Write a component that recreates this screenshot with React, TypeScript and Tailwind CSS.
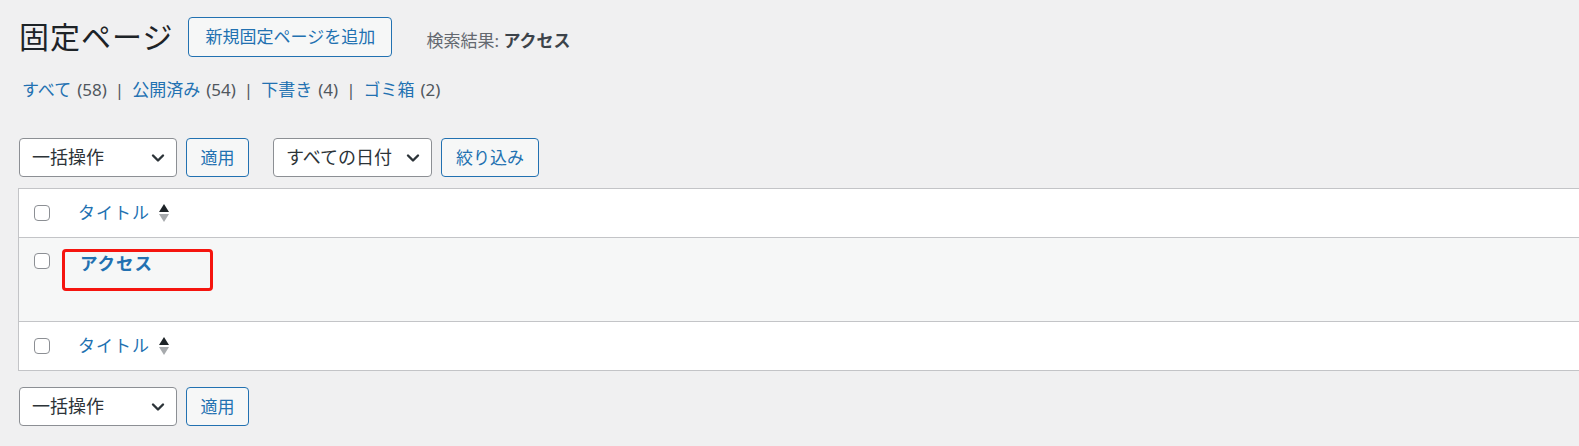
import React from "react";

const font = { fontFamily: '"Noto Sans", "Noto Sans CJK JP", sans-serif' };

function Chevron() {
  return (
    <svg width="16" height="16" viewBox="0 0 16 16" className="shrink-0">
      <path d="M3 5.5 L8 10.5 L13 5.5" fill="none" stroke="#2c3338" strokeWidth="2.4" strokeLinecap="round" strokeLinejoin="round" />
    </svg>
  );
}

function SortArrows() {
  return (
    <svg width="12" height="20" viewBox="0 0 12 20" className="ml-[8px]">
      <path d="M1 9 L6 1 L11 9 Z" fill="#1d2327" />
      <path d="M1 11 L6 19 L11 11 Z" fill="#a7aaad" />
    </svg>
  );
}

function Checkbox() {
  return <div className="w-[16px] h-[16px] rounded-[4px] border border-[#8c8f94] bg-white shrink-0" />;
}

function Select({ label, width, pad = "justify-between" }: { label: string; width: string; pad?: string }) {
  return (
    <div className={`${width} h-[39px] border border-[#8c8f94] rounded-[4px] bg-white flex items-center ${pad} pl-[12px] pr-[10px] text-[18px] text-[#2c3338]`}>
      <span>{label}</span>
      <Chevron />
    </div>
  );
}

function Btn({ label, width }: { label: string; width: string }) {
  return (
    <div className={`${width} h-[39px] border border-[#2271b1] rounded-[4px] bg-[#f6f7f7] flex items-center justify-center text-[17px] text-[#2271b1]`}>
      {label}
    </div>
  );
}

function HeaderRow({ border }: { border: string }) {
  return (
    <div className={`h-[49px] bg-white flex items-center pl-[15px] ${border} border-[#c3c4c7]`}>
      <Checkbox />
      <span className="ml-[28px] text-[17px] text-[#2271b1] tracking-[1px]">タイトル</span>
      <SortArrows />
    </div>
  );
}

function Sep() {
  return <span className="mx-[8px] text-[#50575e]">|</span>;
}

export default function App() {
  return (
    <div className="w-[1579px] h-[446px] bg-[#f0f0f1] overflow-hidden" style={font}>
      <div className="pl-[19px]">
        <div className="flex items-center h-[40px] mt-[17px]">
          <h1 className="text-[30px] text-[#1d2327] font-normal leading-none tracking-[1px]">固定ページ</h1>
          <div className="ml-[15px] w-[204px] h-[40px] border border-[#2271b1] rounded-[4px] bg-[#f6f7f7] flex items-center justify-center text-[17px] text-[#2271b1]">
            新規固定ページを追加
          </div>
          <div className="ml-[34px] mt-[8px] text-[17px] text-[#646970]">
            検索結果: <span className="font-bold text-[#3c434a]">アクセス</span>
          </div>
        </div>
        <div className="mt-[20px] ml-[3px] text-[17px] text-[#50575e] flex items-center h-[26px]">
          <span className="text-[#2271b1]">すべて</span>
          <span className="ml-[6px]">(58)</span>
          <Sep />
          <span className="text-[#2271b1]">公開済み</span>
          <span className="ml-[6px]">(54)</span>
          <Sep />
          <span className="text-[#2271b1]">下書き</span>
          <span className="ml-[6px]">(4)</span>
          <Sep />
          <span className="text-[#2271b1]">ゴミ箱</span>
          <span className="ml-[6px]">(2)</span>
        </div>
        <div className="mt-[35px] flex items-center">
          <Select label="一括操作" width="w-[158px]" />
          <div className="ml-[9px]"><Btn label="適用" width="w-[63px]" /></div>
          <div className="ml-[24px]"><Select label="すべての日付" width="w-[159px]" /></div>
          <div className="ml-[9px]"><Btn label="絞り込み" width="w-[98px]" /></div>
        </div>
      </div>
      <div className="ml-[18px] mt-[11px] border-l border-t border-b border-[#c3c4c7]">
        <HeaderRow border="border-b" />
        <div className="h-[83px] bg-[#f6f7f7] flex items-start pl-[15px] pt-[15px]">
          <Checkbox />
          <div className="ml-[12px] -mt-[4px] w-[151px] h-[42px] border-[3px] border-[#f5150f] rounded-[4px] pl-[15px]">
            <span className="text-[17.5px] font-bold text-[#2271b1] leading-[20px] tracking-[1px]">アクセス</span>
          </div>
        </div>
        <HeaderRow border="border-t" />
      </div>
      <div className="pl-[19px] mt-[16px] flex items-center">
        <Select label="一括操作" width="w-[158px]" />
        <div className="ml-[9px]"><Btn label="適用" width="w-[63px]" /></div>
      </div>
    </div>
  );
}
